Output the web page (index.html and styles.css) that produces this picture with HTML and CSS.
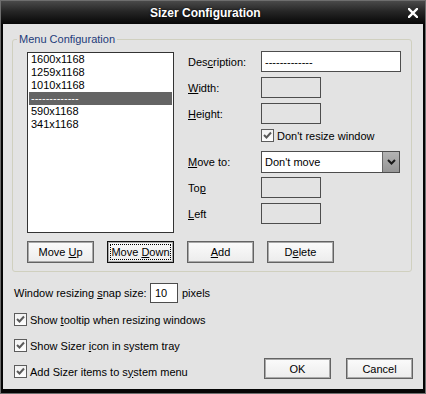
FILE: index.html
```html
<!DOCTYPE html>
<html lang="en">
<head>
  <meta charset="UTF-8">
  <title>Sizer Configuration</title>
  <link rel="stylesheet" href="styles.css">
</head>
<body>
  <div class="window">
    <div class="titlebar">
      <div class="title">Sizer Configuration</div>
      <svg class="close" width="10" height="10" viewBox="0 0 10 10">
        <path d="M1 1 L9 9 M9 1 L1 9" stroke="#fff" stroke-width="2.4" stroke-linecap="square"/>
      </svg>
    </div>

    <div class="client">
      <fieldset class="group">
        <legend>Menu Configuration</legend>
        <div class="group-body">
          <ul class="listbox">
            <li>1600x1168</li>
            <li>1259x1168</li>
            <li>1010x1168</li>
            <li class="selected">-------------</li>
            <li>590x1168</li>
            <li>341x1168</li>
          </ul>

          <div class="fields">
            <div class="field-row">
              <label class="field-label">Des<u>c</u>ription:</label>
              <input class="textbox wide" type="text" value="-------------">
            </div>
            <div class="field-row">
              <label class="field-label"><u>W</u>idth:</label>
              <input class="textbox small" type="text" disabled>
            </div>
            <div class="field-row">
              <label class="field-label"><u>H</u>eight:</label>
              <input class="textbox small" type="text" disabled>
            </div>
            <div class="check-line indent">
              <span class="checkbox">
                <svg width="11" height="11" viewBox="0 0 11 11"><path d="M2 5 L4.5 7.5 L9 2.5" fill="none" stroke="#5a5a5a" stroke-width="2"/></svg>
              </span>
              <span>Don't resize window</span>
            </div>
            <div class="field-row select-row">
              <label class="field-label"><u>M</u>ove to:</label>
              <div class="select">
                <span class="select-value">Don't move</span>
                <span class="select-arrow">
                  <svg width="9" height="6" viewBox="0 0 9 6"><path d="M1 1 L4.5 4.5 L8 1" fill="none" stroke="#1a1a1a" stroke-width="2"/></svg>
                </span>
              </div>
            </div>
            <div class="field-row">
              <label class="field-label">To<u>p</u></label>
              <input class="textbox small" type="text" disabled>
            </div>
            <div class="field-row">
              <label class="field-label"><u>L</u>eft</label>
              <input class="textbox small" type="text" disabled>
            </div>
          </div>
        </div>

        <div class="item-buttons">
          <button>Move <u>U</u>p</button>
          <button class="focused">Move <u>D</u>own</button>
          <button><u>A</u>dd</button>
          <button>D<u>e</u>lete</button>
        </div>
      </fieldset>

      <div class="options">
        <div class="settings">
          <div class="snap-row">
            <span class="snap-label">Window resizing <u>s</u>nap size:</span>
            <input class="textbox snap" type="text" value="10">
            <span class="snap-unit">pixels</span>
          </div>
          <div class="check-line">
            <span class="checkbox">
              <svg width="11" height="11" viewBox="0 0 11 11"><path d="M2 5 L4.5 7.5 L9 2.5" fill="none" stroke="#5a5a5a" stroke-width="2"/></svg>
            </span>
            <span>Show <u>t</u>ooltip when resizing windows</span>
          </div>
          <div class="check-line">
            <span class="checkbox">
              <svg width="11" height="11" viewBox="0 0 11 11"><path d="M2 5 L4.5 7.5 L9 2.5" fill="none" stroke="#5a5a5a" stroke-width="2"/></svg>
            </span>
            <span>Show Sizer <u>i</u>con in system tray</span>
          </div>
          <div class="check-line">
            <span class="checkbox">
              <svg width="11" height="11" viewBox="0 0 11 11"><path d="M2 5 L4.5 7.5 L9 2.5" fill="none" stroke="#5a5a5a" stroke-width="2"/></svg>
            </span>
            <span>Add Sizer items to s<u>y</u>stem menu</span>
          </div>
        </div>

        <div class="dialog-buttons">
          <button class="dialog">OK</button>
          <button class="dialog">Cancel</button>
        </div>
      </div>
    </div>
  </div>
</body>
</html>
```

FILE: styles.css
```css
body {
  margin: 0;
  background-color: #000;
  font-family: "Liberation Sans", Arial, sans-serif;
  font-size: 11px;
  color: #000;
}

u {
  text-decoration: underline;
  text-underline-offset: 1px;
}

.window {
  width: 426px;
  height: 394px;
  box-sizing: border-box;
  border: 1px solid #6e6e6e;
  background-color: #050505;
  display: flex;
  flex-direction: column;
}

.titlebar {
  height: 23px;
  flex: none;
  display: flex;
  align-items: center;
  padding: 1px 7px 0 149px;
  box-sizing: border-box;
  background: linear-gradient(#4a4a4a, #262626 45%, #070707);
}

.title {
  color: #fff;
  font-weight: bold;
  font-size: 12px;
  text-shadow: 0 0 2px #000;
}

.close {
  margin-left: auto;
}

.client {
  flex: 1;
  margin: 0 2px 4px;
  background-color: #e3e3e3;
  overflow: hidden;
}

/* group box */
.group {
  width: 400px;
  box-sizing: border-box;
  margin: 9px 0 0 9px;
  padding: 0 0 8px 0;
  border: 1px solid #d0d0bf;
  border-radius: 3px;
  min-width: 0;
}

.group legend {
  margin-left: 4px;
  padding: 0 2px;
  line-height: 13px;
  color: #1d3b7a;
}

.group-body {
  display: flex;
  align-items: flex-start;
  padding: 6px 0 0 14px;
}

.listbox {
  width: 147px;
  height: 181px;
  box-sizing: border-box;
  margin: 0 14px 0 0;
  padding: 0 1px;
  list-style: none;
  background-color: #fff;
  border: 1px solid #333;
}

.listbox li {
  height: 13px;
  line-height: 13px;
  padding-left: 2px;
}

.listbox li.selected {
  background-color: #646464;
  color: #fff;
}

.fields {
  margin-top: -1px;
}

.field-row {
  display: flex;
  align-items: center;
  height: 21px;
  margin-bottom: 5px;
}

.field-label {
  width: 73px;
}

.textbox {
  box-sizing: border-box;
  height: 21px;
  margin: 0;
  padding: 0 3px;
  border: 1px solid #4d4d4d;
  background-color: #fff;
  font-family: inherit;
  font-size: 11px;
  color: #000;
  outline: none;
}

.textbox:disabled {
  background-color: #e3e3e3;
}

.textbox.wide {
  width: 140px;
}

.textbox.small {
  width: 60px;
}

.check-line {
  display: flex;
  align-items: center;
  height: 13px;
  gap: 3px;
}

.fields .check-line {
  margin: 4px 0 9px;
}

.check-line.indent {
  padding-left: 73px;
}

.checkbox {
  width: 13px;
  height: 13px;
  box-sizing: border-box;
  border: 1px solid #5c5c5c;
  background: linear-gradient(#f2f2f2, #fdfdfd);
  display: flex;
  align-items: center;
  justify-content: center;
}

.select-row {
  height: 22px;
  margin-bottom: 4px;
}

.select {
  width: 139px;
  height: 22px;
  box-sizing: border-box;
  border: 1px solid #4d4d4d;
  background-color: #fff;
  display: flex;
  align-items: center;
}

.select-value {
  flex: 1;
  padding-left: 3px;
}

.select-arrow {
  width: 17px;
  height: 20px;
  box-sizing: border-box;
  border-left: 1px solid #666;
  background: linear-gradient(#b4b4b4, #959595);
  display: flex;
  align-items: center;
  justify-content: center;
}

/* buttons */
button {
  width: 67px;
  height: 22px;
  padding: 0;
  border: 1px solid #636363;
  box-shadow: inset 0 0 0 1px #a9a9a9;
  background: linear-gradient(#fbfbfb, #ececec);
  font-family: inherit;
  font-size: 11px;
  color: #000;
}

button.focused {
  border-color: #111;
  outline: 1px dotted #000;
  outline-offset: -4px;
}

.item-buttons {
  display: flex;
  gap: 13px;
  padding: 8px 0 0 14px;
}

/* bottom options */
.options {
  display: flex;
  justify-content: space-between;
  align-items: flex-end;
  margin-top: 11px;
  padding: 0 10px 0 11px;
}

.snap-row {
  display: flex;
  align-items: center;
  height: 20px;
}

.snap-label {
  width: 136px;
  white-space: nowrap;
}

.textbox.snap {
  width: 28px;
  height: 20px;
  padding-left: 4px;
}

.snap-unit {
  margin-left: 4px;
}

.settings .check-line {
  margin-top: 13px;
}

.snap-row + .check-line {
  margin-top: 10px;
}

.dialog-buttons {
  display: flex;
  gap: 15px;
  margin-bottom: -1px;
}

button.dialog {
  height: 21px;
}
```
